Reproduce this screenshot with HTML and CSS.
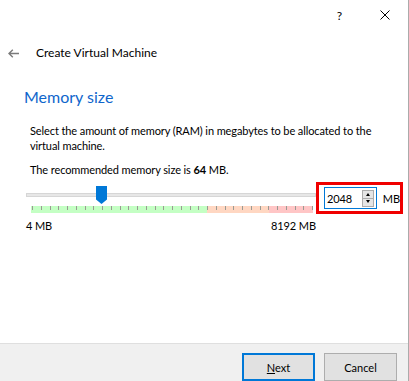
FILE: index.html
```html
<!DOCTYPE html>
<html lang="en">
<head>
  <meta charset="UTF-8">
  <meta name="viewport" content="width=device-width, initial-scale=1.0">
  <title>Create Virtual Machine</title>
  <link rel="stylesheet" href="styles.css">
</head>
<body>
  <div class="window">
    <div class="titlebar">
      <button class="tb-btn help">?</button>
      <button class="tb-btn close">
        <svg width="10" height="10" viewBox="0 0 10 10"><path d="M0.5 0.5 L9.5 9.5 M9.5 0.5 L0.5 9.5" stroke="#000" stroke-width="1"/></svg>
      </button>
    </div>

    <div class="header">
      <span class="back">
        <svg width="11" height="9" viewBox="0 0 11 9"><path d="M11 4.5 H1.2 M4.8 0.7 L1 4.5 L4.8 8.3" fill="none" stroke="#7a7a7a" stroke-width="1.4"/></svg>
      </span>
      <span class="title">Create Virtual Machine</span>
    </div>

    <div class="page">
      <h1>Memory size</h1>
      <p class="desc">Select the amount of memory (RAM) in megabytes to be allocated to the virtual machine.</p>
      <p class="recommend">The recommended memory size is <b>64</b> MB.</p>

      <div class="memory-row">
        <div class="slider">
          <div class="track-area">
            <div class="track"></div>
            <!-- thumb sits at 2048 of 8192 -->
            <svg class="thumb" style="left: 70px" width="11" height="18" viewBox="0 0 11 18"><path d="M0 0 H11 V13.5 L5.5 18 L0 13.5 Z" fill="#0078d7"/></svg>
          </div>
          <div class="scale">
            <!-- one tick per 256 MB -->
            <svg class="ticks" width="282" height="4" viewBox="0 0 282 4" shape-rendering="crispEdges">
              <path d="M1.5 0v4M10.5 0v4M19.5 0v4M27.5 0v4M36.5 0v4M45.5 0v4M54.5 0v4M62.5 0v4M71.5 0v4M80.5 0v4M89.5 0v4M97.5 0v4M106.5 0v4M115.5 0v4M124.5 0v4M132.5 0v4M141.5 0v4M150.5 0v4M159.5 0v4M167.5 0v4M176.5 0v4M185.5 0v4M194.5 0v4M202.5 0v4M211.5 0v4M220.5 0v4M229.5 0v4M237.5 0v4M246.5 0v4M255.5 0v4M264.5 0v4M272.5 0v4M281.5 0v4" stroke="#9a9a92" stroke-width="1"/>
            </svg>
          </div>
          <div class="scale-labels">
            <span>4 MB</span>
            <span>8192 MB</span>
          </div>
        </div>

        <div class="spin-highlight">
          <div class="spinbox">
            <span class="spin-value">2048</span>
            <div class="spin-btns">
              <span class="spin-up"></span>
              <span class="spin-down"></span>
            </div>
          </div>
          <span class="unit">MB</span>
        </div>
      </div>
    </div>

    <div class="footer">
      <button class="btn default"><u>N</u>ext</button>
      <button class="btn">Cancel</button>
    </div>
  </div>
</body>
</html>
```

FILE: styles.css
```css
body {
  margin: 0;
  padding: 0;
  background-color: #fff;
  font-family: Lato, "Noto Sans", sans-serif;
  font-size: 12px;
  color: #000;
}

.window {
  width: 408px;
  height: 381px;
  border-right: 1px solid #ababab;
  display: flex;
  flex-direction: column;
  overflow: hidden;
}

/* title bar */
.titlebar {
  height: 30px;
  display: flex;
  justify-content: flex-end;
}

.tb-btn {
  width: 45px;
  height: 30px;
  border: none;
  background: none;
  padding: 0;
  display: flex;
  align-items: center;
  justify-content: center;
  font-family: inherit;
  font-size: 12px;
  color: #000;
}

.tb-btn.close {
  margin-right: 1px;
}

/* wizard header */
.header {
  height: 46px;
  display: flex;
  align-items: center;
  padding-left: 8px;
}

.back {
  display: flex;
  margin-right: 17px;
}

.title {
  line-height: 16px;
}

/* page body */
.page {
  flex: 1;
  padding-left: 24px;
  font-size: 11px;
  letter-spacing: -0.1px;
}

h1 {
  margin: 10px 0 15px;
  font-size: 16px;
  font-weight: normal;
  letter-spacing: 0;
  line-height: 22px;
  color: #0f66cc;
}

.desc,
.recommend {
  margin: 0 0 0 6px;
  line-height: 15px;
  width: 372px;
}

.recommend {
  margin-top: 9px;
}

.recommend b {
  font-weight: bold;
}

.memory-row {
  display: flex;
  align-items: flex-start;
  margin: 5px 0 0 2px;
}

/* slider */
.slider {
  width: 290px;
}

.track-area {
  position: relative;
  height: 22px;
}

.track {
  position: absolute;
  top: 11px;
  left: 0;
  right: 0;
  height: 4px;
  box-sizing: border-box;
  background-color: #e7e7e7;
  border: 1px solid #d6d6d6;
}

.thumb {
  position: absolute;
  top: 4px;
  display: block;
}

.scale {
  margin: 2px 0 0 5px;
  width: 282px;
  height: 7px;
  background: linear-gradient(to right, #c4ffc4 0 176px, #ffd7c2 176px 238px, #ffc6c6 238px);
}

.ticks {
  display: block;
}

.scale-labels {
  display: flex;
  justify-content: space-between;
  margin-top: 5px;
  line-height: 15px;
}

/* spin box group */
.spin-highlight {
  width: 87px;
  height: 32px;
  box-sizing: border-box;
  border: 3px solid #f00000;
  display: flex;
  align-items: center;
  padding-left: 5px;
}

.spinbox {
  width: 54px;
  height: 22px;
  box-sizing: border-box;
  border: 1px solid #0078d7;
  display: flex;
  align-items: center;
  justify-content: space-between;
  padding: 0 2px 0 2px;
  background-color: #fff;
}

.spin-value {
  line-height: 15px;
}

.spin-btns {
  display: flex;
  flex-direction: column;
  width: 12px;
}

.spin-up,
.spin-down {
  height: 9px;
  box-sizing: border-box;
  border: 1px solid #acacac;
  background-color: #e5e5e5;
  position: relative;
}

.spin-down {
  border-top: none;
  height: 8px;
}

.spin-up::after,
.spin-down::after {
  content: "";
  position: absolute;
  left: 3px;
  border-left: 2.5px solid transparent;
  border-right: 2.5px solid transparent;
}

.spin-up::after {
  top: 2px;
  border-bottom: 3px solid #000;
}

.spin-down::after {
  top: 1px;
  border-top: 3px solid #000;
}

.unit {
  margin-left: 6px;
}

/* footer buttons */
.footer {
  height: 38px;
  box-sizing: border-box;
  border-top: 1px solid #dfdfdf;
  background-color: #f0f0f0;
  display: flex;
  justify-content: flex-end;
  align-items: flex-start;
  gap: 9px;
  padding: 9px 11px 0 0;
}

.btn {
  width: 73px;
  height: 28px;
  box-sizing: border-box;
  background-color: #e1e1e1;
  border: 1px solid #adadad;
  font-family: inherit;
  font-size: 11px;
  color: #000;
  padding: 0;
}

.btn.default {
  border: 2px solid #0078d7;
}
```
